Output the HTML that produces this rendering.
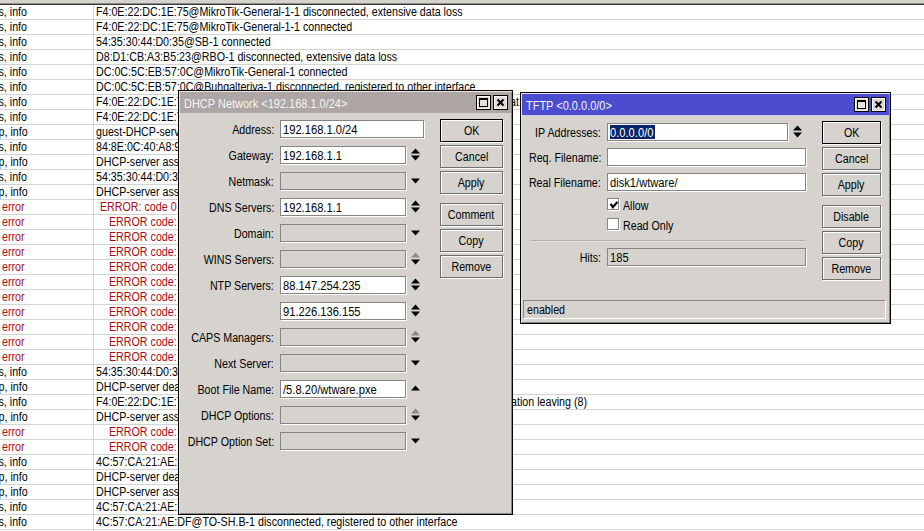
<!DOCTYPE html>
<html><head><meta charset="utf-8"><style>
html,body{margin:0;padding:0;}
body{width:924px;height:531px;overflow:hidden;position:relative;background:#fff;font-family:"Liberation Sans",sans-serif;}
div{position:absolute;box-sizing:border-box;}
.t{white-space:pre;font-size:12px;line-height:14px;color:#000;transform:scaleX(0.89);transform-origin:0 0;}
.r{transform-origin:100% 0;}
.val{transform:scaleX(0.93);}
.red{color:#a80c16;}
#top{left:0;top:0;width:924px;height:5px;background:#d6d3cf;border-bottom:1px solid #383838;box-shadow:inset 0 -1px 0 #8e8c88;}
.rowline{left:0;width:924px;height:1px;background:#d3d3d3;}
#colsep{left:93px;top:5px;width:1px;height:526px;background:#cfcfcf;}
.win{background:#d6d3ce;border:1px solid #000;box-shadow:inset 1px 1px 0 #e8e6e0, inset -1px -1px 0 #8a8782;}
.tb{}
.tbi{background:#aea6a4;}
.tba{background:#4c4cd0;}
.ttl{color:#f4f4f4;transform:scaleX(0.915);}
.tbtn{border:1px solid #000;box-sizing:content-box;background:#dedad2;box-shadow:inset 1px 1px 0 #fff, inset -1px -1px 0 #f4f2ee;}
.maxi{left:2px;top:2px;width:9px;height:9px;border:1px solid #000;border-top-width:2px;background:#e6e3dc;}
.fld{border:1px solid #858585;background:#fff;box-shadow:1px 1px 0 #fff;box-sizing:content-box;}
.fld.dis{background:#d6d3ce;}
.selbg{background:#0a246a;}
.ab{position:absolute;}
.btn{border:1px solid #6e6e6e;box-sizing:content-box;background:#d6d3ce;box-shadow:inset 1px 1px 0 #fff, 1px 1px 0 #fff;display:flex;align-items:center;justify-content:center;}
.btn.def{border-color:#000;}
.btn span{font-size:12px;line-height:14px;white-space:pre;transform:scaleX(0.89);}
.cb{width:10px;height:10px;border:1px solid #858585;background:#fff;box-shadow:1px 1px 0 #fff;box-sizing:content-box;}
.hr{background:#b4b0aa;box-shadow:0 1px 0 #e2e0dc;}
.status{border-top:1px solid #8a8782;border-left:1px solid #8a8782;box-shadow:1px 1px 0 #fff;background:#d6d3ce;box-sizing:content-box;}
</style></head><body>
<div id="top"></div>
<div class="rowline" style="top:19px"></div>
<div class="rowline" style="top:34px"></div>
<div class="rowline" style="top:49px"></div>
<div class="rowline" style="top:64px"></div>
<div class="rowline" style="top:79px"></div>
<div class="rowline" style="top:94px"></div>
<div class="rowline" style="top:109px"></div>
<div class="rowline" style="top:124px"></div>
<div class="rowline" style="top:139px"></div>
<div class="rowline" style="top:154px"></div>
<div class="rowline" style="top:169px"></div>
<div class="rowline" style="top:184px"></div>
<div class="rowline" style="top:199px"></div>
<div class="rowline" style="top:214px"></div>
<div class="rowline" style="top:229px"></div>
<div class="rowline" style="top:244px"></div>
<div class="rowline" style="top:259px"></div>
<div class="rowline" style="top:274px"></div>
<div class="rowline" style="top:289px"></div>
<div class="rowline" style="top:304px"></div>
<div class="rowline" style="top:319px"></div>
<div class="rowline" style="top:334px"></div>
<div class="rowline" style="top:349px"></div>
<div class="rowline" style="top:364px"></div>
<div class="rowline" style="top:379px"></div>
<div class="rowline" style="top:394px"></div>
<div class="rowline" style="top:409px"></div>
<div class="rowline" style="top:424px"></div>
<div class="rowline" style="top:439px"></div>
<div class="rowline" style="top:454px"></div>
<div class="rowline" style="top:469px"></div>
<div class="rowline" style="top:484px"></div>
<div class="rowline" style="top:499px"></div>
<div class="rowline" style="top:514px"></div>
<div class="rowline" style="top:529px"></div>
<div id="colsep"></div>
<div class="t r " style="right:897px;top:5px;">s, info</div>
<div class="t " style="left:96px;top:5px;">F4:0E:22:DC:1E:75@MikroTik-General-1-1 disconnected, extensive data loss</div>
<div class="t r " style="right:897px;top:20px;">s, info</div>
<div class="t " style="left:96px;top:20px;">F4:0E:22:DC:1E:75@MikroTik-General-1-1 connected</div>
<div class="t r " style="right:897px;top:35px;">s, info</div>
<div class="t " style="left:96px;top:35px;">54:35:30:44:D0:35@SB-1 connected</div>
<div class="t r " style="right:897px;top:50px;">s, info</div>
<div class="t " style="left:96px;top:50px;">D8:D1:CB:A3:B5:23@RBO-1 disconnected, extensive data loss</div>
<div class="t r " style="right:897px;top:65px;">s, info</div>
<div class="t " style="left:96px;top:65px;">DC:0C:5C:EB:57:0C@MikroTik-General-1 connected</div>
<div class="t r " style="right:897px;top:80px;">s, info</div>
<div class="t " style="left:96px;top:80px;">DC:0C:5C:EB:57:0C@Buhgalteriya-1 disconnected, registered to other interface</div>
<div class="t r " style="right:897px;top:95px;">s, info</div>
<div class="t " style="left:96px;top:95px;">F4:0E:22:DC:1E:75@MikroTik-General-1-1 disconnected</div>
<div class="t r " style="right:897px;top:110px;">s, info</div>
<div class="t " style="left:96px;top:110px;">F4:0E:22:DC:1E:75@MikroTik-General-1-1 connected</div>
<div class="t r " style="right:896px;top:125px;">p, info</div>
<div class="t " style="left:96px;top:125px;">guest-DHCP-server assigned</div>
<div class="t r " style="right:897px;top:140px;">s, info</div>
<div class="t " style="left:96px;top:140px;">84:8E:0C:40:A8:9C@MikroTik connected</div>
<div class="t r " style="right:896px;top:155px;">p, info</div>
<div class="t " style="left:96px;top:155px;">DHCP-server assigned</div>
<div class="t r " style="right:897px;top:170px;">s, info</div>
<div class="t " style="left:96px;top:170px;">54:35:30:44:D0:35@SB-1 connected</div>
<div class="t r " style="right:896px;top:185px;">p, info</div>
<div class="t " style="left:96px;top:185px;">DHCP-server assigned</div>
<div class="t red" style="left:2px;top:200px;">error</div>
<div class="t red" style="left:100px;top:200px;">ERROR: code 0</div>
<div class="t red" style="left:2px;top:215px;">error</div>
<div class="t red" style="left:109px;top:215px;">ERROR code:</div>
<div class="t red" style="left:2px;top:230px;">error</div>
<div class="t red" style="left:109px;top:230px;">ERROR code:</div>
<div class="t red" style="left:2px;top:245px;">error</div>
<div class="t red" style="left:109px;top:245px;">ERROR code:</div>
<div class="t red" style="left:2px;top:260px;">error</div>
<div class="t red" style="left:109px;top:260px;">ERROR code:</div>
<div class="t red" style="left:2px;top:275px;">error</div>
<div class="t red" style="left:109px;top:275px;">ERROR code:</div>
<div class="t red" style="left:2px;top:290px;">error</div>
<div class="t red" style="left:109px;top:290px;">ERROR code:</div>
<div class="t red" style="left:2px;top:305px;">error</div>
<div class="t red" style="left:109px;top:305px;">ERROR code:</div>
<div class="t red" style="left:2px;top:320px;">error</div>
<div class="t red" style="left:109px;top:320px;">ERROR code:</div>
<div class="t red" style="left:2px;top:335px;">error</div>
<div class="t red" style="left:109px;top:335px;">ERROR code:</div>
<div class="t red" style="left:2px;top:350px;">error</div>
<div class="t red" style="left:109px;top:350px;">ERROR code:</div>
<div class="t r " style="right:897px;top:365px;">s, info</div>
<div class="t " style="left:96px;top:365px;">54:35:30:44:D0:35@SB-1 connected</div>
<div class="t r " style="right:896px;top:380px;">p, info</div>
<div class="t " style="left:96px;top:380px;">DHCP-server deassigned</div>
<div class="t r " style="right:897px;top:395px;">s, info</div>
<div class="t " style="left:96px;top:395px;">F4:0E:22:DC:1E:75@MikroTik-General-1-1 disconnected</div>
<div class="t r " style="right:896px;top:410px;">p, info</div>
<div class="t " style="left:96px;top:410px;">DHCP-server assigned</div>
<div class="t red" style="left:2px;top:425px;">error</div>
<div class="t red" style="left:109px;top:425px;">ERROR code:</div>
<div class="t red" style="left:2px;top:440px;">error</div>
<div class="t red" style="left:109px;top:440px;">ERROR code:</div>
<div class="t r " style="right:897px;top:455px;">s, info</div>
<div class="t " style="left:96px;top:455px;">4C:57:CA:21:AE:DF@TO-SH.B-1 connected</div>
<div class="t r " style="right:896px;top:470px;">p, info</div>
<div class="t " style="left:96px;top:470px;">DHCP-server deassigned</div>
<div class="t r " style="right:896px;top:485px;">p, info</div>
<div class="t " style="left:96px;top:485px;">DHCP-server assigned</div>
<div class="t r " style="right:897px;top:500px;">s, info</div>
<div class="t " style="left:96px;top:500px;">4C:57:CA:21:AE:DF@TO-SH.B-1 connected</div>
<div class="t r " style="right:897px;top:515px;">s, info</div>
<div class="t " style="left:96px;top:515px;">4C:57:CA:21:AE:DF@TO-SH.B-1 disconnected, registered to other interface</div>
<div class="t " style="left:510px;top:95px;">at</div>
<div class="t " style="left:511px;top:395px;">ation leaving (8)</div>
<div class="win" style="left:178px;top:90px;width:335px;height:425px;"></div>
<div class="tb tbi" style="left:180px;top:92px;width:331px;height:21px;"></div>
<div class="t ttl" style="left:184px;top:97px;">DHCP Network &lt;192.168.1.0/24&gt;</div>
<div class="tbtn" style="left:476px;top:95px;width:13px;height:13px;"><div class="maxi"></div></div>
<div class="tbtn" style="left:493px;top:95px;width:13px;height:13px;"><svg width="13" height="13" style="position:absolute;left:0;top:0"><path d="M3.5 3.5 L9.5 9.5 M9.5 3.5 L3.5 9.5" stroke="#000" stroke-width="2"/></svg></div>
<div class="t r " style="right:650px;top:123px;">Address:</div>
<div class="fld" style="left:280px;top:120px;width:142px;height:16px;"></div>
<div class="t val" style="left:283px;top:123px;">192.168.1.0/24</div>
<div class="t r " style="right:650px;top:149px;">Gateway:</div>
<div class="fld" style="left:280px;top:146px;width:124px;height:16px;"></div>
<div class="t val" style="left:283px;top:149px;">192.168.1.1</div>
<svg class="ab" style="left:410px;top:148px" width="11" height="6"><path d="M1 5.5 L5.5 0.5 L10 5.5Z" fill="#000"/></svg>
<svg class="ab" style="left:410px;top:155px" width="11" height="6"><path d="M1 0.5 L5.5 5.5 L10 0.5Z" fill="#000"/></svg>
<div class="t r " style="right:650px;top:175px;">Netmask:</div>
<div class="fld dis" style="left:280px;top:172px;width:124px;height:16px;"></div>
<svg class="ab" style="left:410px;top:178px" width="11" height="6"><path d="M1 0.5 L5.5 5.5 L10 0.5Z" fill="#000"/></svg>
<div class="t r " style="right:650px;top:201px;">DNS Servers:</div>
<div class="fld" style="left:280px;top:198px;width:124px;height:16px;"></div>
<div class="t val" style="left:283px;top:201px;">192.168.1.1</div>
<svg class="ab" style="left:410px;top:200px" width="11" height="6"><path d="M1 5.5 L5.5 0.5 L10 5.5Z" fill="#000"/></svg>
<svg class="ab" style="left:410px;top:207px" width="11" height="6"><path d="M1 0.5 L5.5 5.5 L10 0.5Z" fill="#000"/></svg>
<div class="t r " style="right:650px;top:227px;">Domain:</div>
<div class="fld dis" style="left:280px;top:224px;width:124px;height:16px;"></div>
<svg class="ab" style="left:410px;top:230px" width="11" height="6"><path d="M1 0.5 L5.5 5.5 L10 0.5Z" fill="#000"/></svg>
<div class="t r " style="right:650px;top:253px;">WINS Servers:</div>
<div class="fld dis" style="left:280px;top:250px;width:124px;height:16px;"></div>
<svg class="ab" style="left:410px;top:252px" width="11" height="6"><path d="M1 5.5 L5.5 0.5 L10 5.5Z" fill="#8c8c8c"/></svg>
<svg class="ab" style="left:410px;top:259px" width="11" height="6"><path d="M1 0.5 L5.5 5.5 L10 0.5Z" fill="#000"/></svg>
<div class="t r " style="right:650px;top:279px;">NTP Servers:</div>
<div class="fld" style="left:280px;top:276px;width:124px;height:16px;"></div>
<div class="t val" style="left:283px;top:279px;">88.147.254.235</div>
<svg class="ab" style="left:410px;top:278px" width="11" height="6"><path d="M1 5.5 L5.5 0.5 L10 5.5Z" fill="#000"/></svg>
<svg class="ab" style="left:410px;top:285px" width="11" height="6"><path d="M1 0.5 L5.5 5.5 L10 0.5Z" fill="#000"/></svg>
<div class="fld" style="left:280px;top:302px;width:124px;height:16px;"></div>
<div class="t val" style="left:283px;top:305px;">91.226.136.155</div>
<svg class="ab" style="left:410px;top:304px" width="11" height="6"><path d="M1 5.5 L5.5 0.5 L10 5.5Z" fill="#000"/></svg>
<svg class="ab" style="left:410px;top:311px" width="11" height="6"><path d="M1 0.5 L5.5 5.5 L10 0.5Z" fill="#000"/></svg>
<div class="t r " style="right:650px;top:331px;">CAPS Managers:</div>
<div class="fld dis" style="left:280px;top:328px;width:124px;height:16px;"></div>
<svg class="ab" style="left:410px;top:330px" width="11" height="6"><path d="M1 5.5 L5.5 0.5 L10 5.5Z" fill="#8c8c8c"/></svg>
<svg class="ab" style="left:410px;top:337px" width="11" height="6"><path d="M1 0.5 L5.5 5.5 L10 0.5Z" fill="#000"/></svg>
<div class="t r " style="right:650px;top:357px;">Next Server:</div>
<div class="fld dis" style="left:280px;top:354px;width:124px;height:16px;"></div>
<svg class="ab" style="left:410px;top:360px" width="11" height="6"><path d="M1 0.5 L5.5 5.5 L10 0.5Z" fill="#000"/></svg>
<div class="t r " style="right:650px;top:383px;">Boot File Name:</div>
<div class="fld" style="left:280px;top:380px;width:124px;height:16px;"></div>
<div class="t val" style="left:283px;top:383px;">/5.8.20/wtware.pxe</div>
<svg class="ab" style="left:410px;top:385px" width="11" height="6"><path d="M1 5.5 L5.5 0.5 L10 5.5Z" fill="#000"/></svg>
<div class="t r " style="right:650px;top:409px;">DHCP Options:</div>
<div class="fld dis" style="left:280px;top:406px;width:124px;height:16px;"></div>
<svg class="ab" style="left:410px;top:408px" width="11" height="6"><path d="M1 5.5 L5.5 0.5 L10 5.5Z" fill="#8c8c8c"/></svg>
<svg class="ab" style="left:410px;top:415px" width="11" height="6"><path d="M1 0.5 L5.5 5.5 L10 0.5Z" fill="#000"/></svg>
<div class="t r " style="right:650px;top:435px;">DHCP Option Set:</div>
<div class="fld dis" style="left:280px;top:432px;width:124px;height:16px;"></div>
<svg class="ab" style="left:410px;top:438px" width="11" height="6"><path d="M1 0.5 L5.5 5.5 L10 0.5Z" fill="#000"/></svg>
<div class="btn def" style="left:440px;top:119px;width:61px;height:21px;"><span>OK</span></div>
<div class="btn" style="left:440px;top:145px;width:61px;height:21px;"><span>Cancel</span></div>
<div class="btn" style="left:440px;top:171px;width:61px;height:21px;"><span>Apply</span></div>
<div class="btn" style="left:440px;top:203px;width:61px;height:21px;"><span>Comment</span></div>
<div class="btn" style="left:440px;top:229px;width:61px;height:21px;"><span>Copy</span></div>
<div class="btn" style="left:440px;top:255px;width:61px;height:21px;"><span>Remove</span></div>
<div class="win" style="left:520px;top:92px;width:371px;height:232px;"></div>
<div class="tb tba" style="left:522px;top:94px;width:367px;height:21px;"></div>
<div class="" style="left:522px;top:115px;width:367px;height:1px;background:#cdcbea"></div>
<div class="t ttl" style="left:526px;top:99px;">TFTP &lt;0.0.0.0/0&gt;</div>
<div class="tbtn" style="left:854px;top:97px;width:13px;height:13px;"><div class="maxi"></div></div>
<div class="tbtn" style="left:871px;top:97px;width:13px;height:13px;"><svg width="13" height="13" style="position:absolute;left:0;top:0"><path d="M3.5 3.5 L9.5 9.5 M9.5 3.5 L3.5 9.5" stroke="#000" stroke-width="2"/></svg></div>
<div class="t r " style="right:323px;top:126px;">IP Addresses:</div>
<div class="fld" style="left:607px;top:123px;width:179px;height:16px;"></div>
<div class="selbg" style="left:610px;top:125px;width:45px;height:14px;"></div>
<div class="t val" style="left:610px;top:126px;color:#fff">0.0.0.0/0</div>
<svg class="ab" style="left:792px;top:125px" width="11" height="6"><path d="M1 5.5 L5.5 0.5 L10 5.5Z" fill="#000"/></svg>
<svg class="ab" style="left:792px;top:132px" width="11" height="6"><path d="M1 0.5 L5.5 5.5 L10 0.5Z" fill="#000"/></svg>
<div class="t r " style="right:323px;top:151px;">Req. Filename:</div>
<div class="fld" style="left:607px;top:148px;width:197px;height:16px;"></div>
<div class="t r " style="right:323px;top:176px;">Real Filename:</div>
<div class="fld" style="left:607px;top:173px;width:197px;height:16px;"></div>
<div class="t val" style="left:610px;top:176px;">disk1/wtware/</div>
<div class="cb" style="left:607px;top:198px"><svg width="12" height="12" style="position:absolute;left:-1px;top:-1px"><path d="M3.6 5.8 L5.9 9.2 L10.4 3.9" stroke="#000" stroke-width="2.2" fill="none"/></svg></div>
<div class="t " style="left:623px;top:199px;">Allow</div>
<div class="cb" style="left:607px;top:218px"></div>
<div class="t " style="left:623px;top:219px;">Read Only</div>
<div class="hr" style="left:530px;top:240px;width:276px;height:1px;"></div>
<div class="t r " style="right:323px;top:251px;">Hits:</div>
<div class="fld dis" style="left:607px;top:248px;width:197px;height:16px;"></div>
<div class="t val" style="left:610px;top:251px;">185</div>
<div class="btn def" style="left:822px;top:121px;width:57px;height:21px;"><span>OK</span></div>
<div class="btn" style="left:822px;top:147px;width:57px;height:21px;"><span>Cancel</span></div>
<div class="btn" style="left:822px;top:173px;width:57px;height:21px;"><span>Apply</span></div>
<div class="btn" style="left:822px;top:205px;width:57px;height:21px;"><span>Disable</span></div>
<div class="btn" style="left:822px;top:231px;width:57px;height:21px;"><span>Copy</span></div>
<div class="btn" style="left:822px;top:257px;width:57px;height:21px;"><span>Remove</span></div>
<div class="status" style="left:523px;top:300px;width:361px;height:17px;"></div>
<div class="t " style="left:527px;top:303px;">enabled</div>
</body></html>
